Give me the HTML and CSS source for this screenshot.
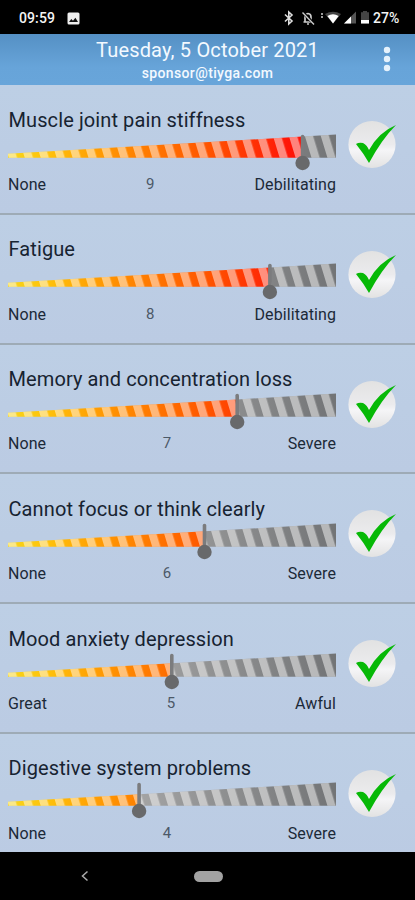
FILE: index.html
```html
<!DOCTYPE html>
<html lang="en">
<head>
<meta charset="utf-8">
<title>Symptoms</title>
<link rel="stylesheet" href="styles.css">
</head>
<body>
<svg class="defs" width="0" height="0" aria-hidden="true">
  <defs>
    <linearGradient id="warm" gradientUnits="userSpaceOnUse" x1="8" y1="0" x2="336" y2="0">
      <stop offset="0" stop-color="#f6d51c"/><stop offset=".12" stop-color="#ffc20a"/>
      <stop offset=".35" stop-color="#ff8a00"/><stop offset=".62" stop-color="#ff5200"/>
      <stop offset=".85" stop-color="#ff1708"/><stop offset="1" stop-color="#ff0000"/>
    </linearGradient>
    <linearGradient id="cool" gradientUnits="userSpaceOnUse" x1="130" y1="0" x2="336" y2="0">
      <stop offset="0" stop-color="#a6a6a6"/><stop offset="1" stop-color="#727476"/>
    </linearGradient>
    <pattern id="stripes" patternUnits="userSpaceOnUse" x="8.9" y="0" width="15.93" height="40" patternTransform="translate(0 26) skewX(17) translate(0 -26)">
      <rect width="8.3" height="40" fill="#fff" fill-opacity=".48"/>
    </pattern>
    <linearGradient id="disc" x1="0" y1="0" x2="0" y2="1">
      <stop offset="0" stop-color="#e2e2e2"/><stop offset=".5" stop-color="#ebebed"/>
      <stop offset=".62" stop-color="#f5f5f7"/><stop offset="1" stop-color="#e2e2e2"/>
    </linearGradient>
  </defs>
</svg>
<div class="status">
  <span class="clock">09:59</span>
  <svg class="photo" width="13" height="13" viewBox="0 0 13 13"><rect x=".5" y=".5" width="12" height="12" rx="1.5" fill="#eee"/><path d="M2 10 4.3 7 6 8.8 8.4 5.8 11 10Z" fill="#111"/></svg>
  <svg class="tray" width="90" height="18" viewBox="0 0 90 18">
    <path d="M1 5.5 8 12 4.8 15V3L8 6 1 12.5" fill="none" stroke="#ddd" stroke-width="1.6"/>
    <path d="M21 13V8Q21 4.8 24 4.5Q27 4.8 27 8V13M19.5 13H28.5M23 15H25" fill="none" stroke="#ccc" stroke-width="1.7"/>
    <path d="M18.5 3 30 15" stroke="#000" stroke-width="3"/><path d="M18.5 3.5 30 15.5" stroke="#ccc" stroke-width="1.4"/>
    <path d="M38 4V9" stroke="#aaa" stroke-width="1.8" stroke-dasharray="2 1"/>
    <path d="M41 5Q49 .5 57 5L49 14.5Z" fill="#444"/><path d="M43.4 7Q49 3.4 54.6 7L49 14.5Z" fill="#fff"/>
    <path d="M60 14.5 72 2.5V14.5Z" fill="#555"/><path d="M60 14.5 67 7.5V14.5Z" fill="#fff"/>
    <path d="M79 2H83V3.2H85V14.5H77V3.2H79Z" fill="#444"/><path d="M77 11H85V14.5H77Z" fill="#fff"/>
  </svg>
  <span class="charge">27%</span>
</div>
<header class="bar">
  <div class="date">Tuesday, 5 October 2021</div>
  <div class="account">sponsor@tiyga.com</div>
  <svg class="menu" width="8" height="28" viewBox="0 0 8 28" fill="#e6f2fc"><circle cx="4" cy="5" r="3.2"/><circle cx="4" cy="14" r="3.2"/><circle cx="4" cy="23" r="3.2"/></svg>
</header>
<main class="list" id="list"></main>
<nav class="nav">
  <svg class="back" width="10" height="12" viewBox="0 0 10 12"><path d="M7.5 1.5 2.5 6 7.5 10.5" fill="none" stroke="#aaa" stroke-width="1.5"/></svg>
  <span class="home"></span>
</nav>
<script src="script.js"></script>
</body>
</html>
```
FILE: styles.css
```css
* { box-sizing: border-box; }
body { margin: 0; width: 415px; height: 900px; overflow: hidden; display: flex; flex-direction: column; background: #000; font-family: Roboto, "Liberation Sans", sans-serif; }
.defs { position: absolute; }
.status { height: 34px; flex: none; display: flex; align-items: center; padding: 2px 15px 0 19px; color: #f4f4f4; }
.clock { font-size: 14px; font-weight: 500; width: 48px; letter-spacing: .1px; }
.photo { display: block; }
.tray { margin-left: auto; }
.charge { font-size: 14px; font-weight: 500; width: 27px; margin-left: -1px; }
.bar { position: relative; height: 51px; flex: none; text-align: center; color: #f3f9ff; background: linear-gradient(#5590c4, #67a4d9 65%, #68a5da); }
.date { font-size: 20px; line-height: 24px; padding-top: 4px; letter-spacing: .17px; }
.account { font-size: 14px; line-height: 16px; padding-top: 3px; letter-spacing: .38px; font-weight: 500; }
.menu { position: absolute; right: 24px; top: 11px; }
.list { height: 767px; flex: none; overflow: hidden; background: #bccce3; }
.row { height: 129.8px; padding-left: 8px; display: flex; border-bottom: 2px solid #9eabb6; background: linear-gradient(#bdcfe5, #bbcbe3); }
.entry { width: 328px; padding-top: 22.5px; }
.name { font-size: 20px; line-height: 24px; letter-spacing: .1px; padding-left: .5px; color: #172331; white-space: nowrap; }
.slider { display: block; margin-left: -8px; }
.scale { display: flex; justify-content: space-between; font-size: 16px; line-height: 20px; letter-spacing: .08px; color: #1b2938; padding-top: 3.3px; }
.value { font-size: 15px; line-height: 18px; color: #4c5968; }
.tick { margin: 35px 0 0 9px; display: block; }
.nav { height: 48px; display: flex; align-items: center; }
.back { margin-left: 80px; }
.home { width: 29px; height: 11px; margin-left: 104px; border-radius: 6px; background: #a2a2a2; }
```
FILE: script.js
```js
const symptoms = [
  ["Muscle joint pain stiffness", "None", 9, "Debilitating"],
  ["Fatigue", "None", 8, "Debilitating"],
  ["Memory and concentration loss", "None", 7, "Severe"],
  ["Cannot focus or think clearly", "None", 6, "Severe"],
  ["Mood anxiety depression", "Great", 5, "Awful"],
  ["Digestive system problems", "None", 4, "Severe"]
];

// The wedge widens from 4px at the left to 23px at the right.
const topAt = x => 21.8 - (x - 8) * 19.2 / 328;

document.getElementById("list").innerHTML = symptoms.map(([name, low, value, high]) => {
  const x = 8.3 + 32.7 * value;
  const left = `M8 ${topAt(8)}L${x} ${topAt(x)}V25.7H8Z`;
  const right = `M${x} ${topAt(x)}L336 ${topAt(336)}V25.7H${x}Z`;
  return `<section class="row">
    <div class="entry">
      <div class="name">${name}</div>
      <svg class="slider" width="344" height="40" viewBox="0 0 344 40">
        <path d="${left}" fill="url(#warm)"/><path d="${right}" fill="url(#cool)"/>
        <path d="${left}" fill="url(#stripes)"/><path d="${right}" fill="url(#stripes)"/>
        <path d="M${x} 4.5V28" stroke="#7b7c7e" stroke-width="3.6" stroke-linecap="round"/>
        <circle cx="${x}" cy="31" r="7.2" fill="#68696b"/>
      </svg>
      <div class="scale"><span>${low}</span><span class="value">${value}</span><span>${high}</span></div>
    </div>
    <svg class="tick" width="56" height="50" viewBox="0 0 56 50">
      <circle cx="27" cy="24.5" r="23.6" fill="url(#disc)"/>
      <path d="M11 24Q14 22 18 23Q22 25 24 30Q34 12 51 5Q37 19 24 43Q19 34 11 24Z" fill="#07b907"/>
    </svg>
  </section>`;
}).join("");
```
